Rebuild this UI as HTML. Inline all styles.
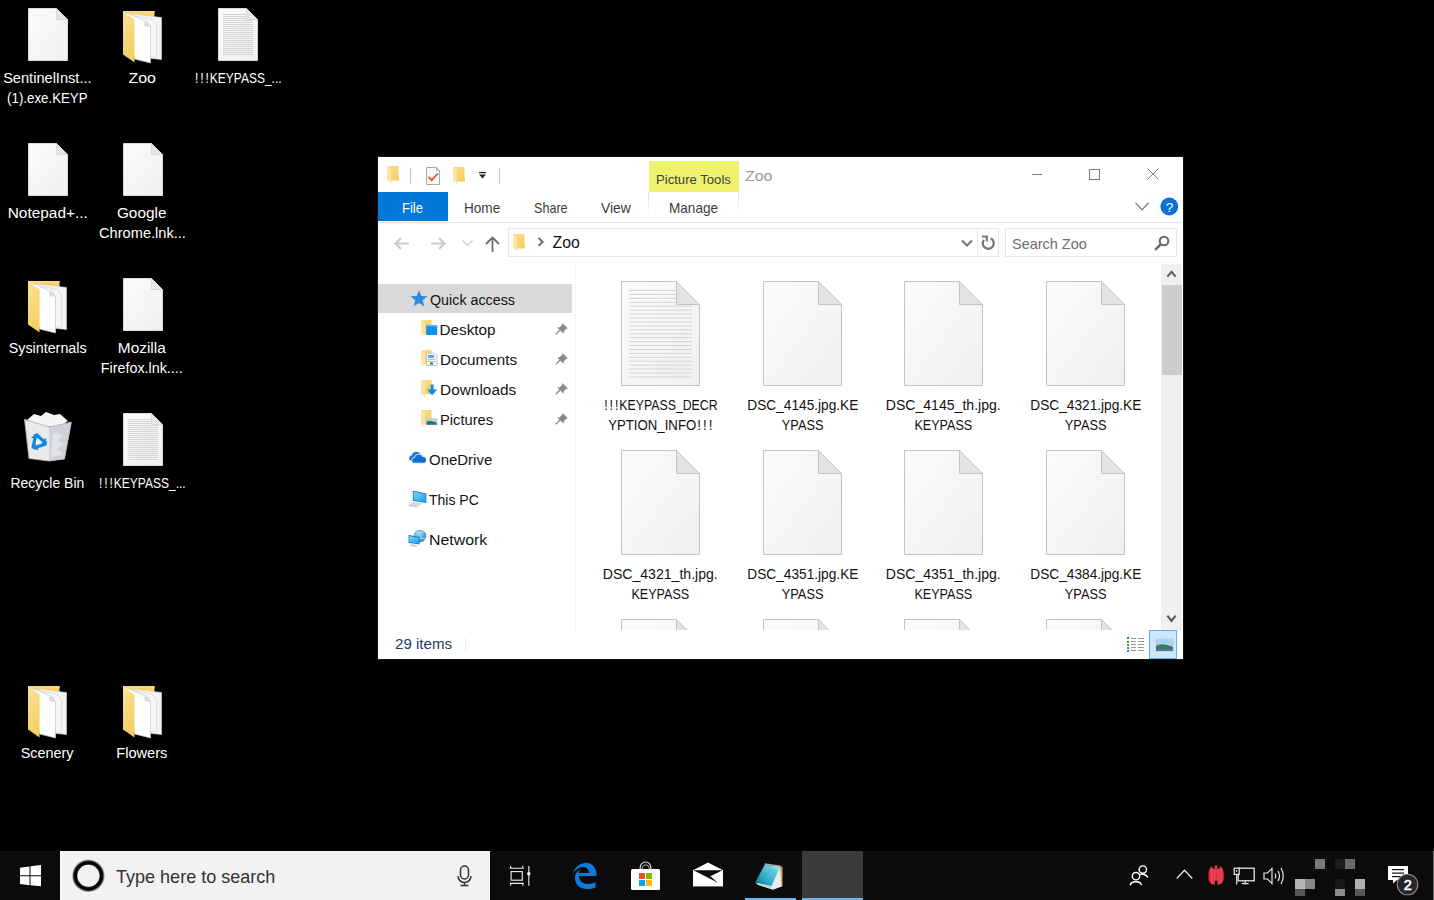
<!DOCTYPE html><html><head><meta charset="utf-8"><title>Desktop</title><style>
*{margin:0;padding:0;box-sizing:border-box}
html,body{width:1434px;height:900px;overflow:hidden;background:#000;font-family:"Liberation Sans", sans-serif;position:relative}
.a{position:absolute;display:block}
.t{position:absolute;white-space:pre;font-family:"Liberation Sans", sans-serif}
</style></head><body><svg class="a" style="left:28px;top:8px" width="40" height="53" viewBox="0 0 40 53"><defs><linearGradient id="g1" x1="0" y1="0" x2="1" y2="1"><stop offset="0" stop-color="#fbfbfb"/><stop offset="1" stop-color="#eff0f1"/></linearGradient></defs><path d="M0.5 0.5 H28.5 L39.5 11.5 V52.5 H0.5 Z" fill="url(#g1)" stroke="#d8d8d8"/><path d="M28.5 0.5 V11.5 H39.5 Z" fill="#e6e6e6" stroke="#d8d8d8"/></svg><svg class="a" style="left:123px;top:10px" width="40" height="54" viewBox="0 0 40 54"><defs><linearGradient id="g2" x1="0" y1="0" x2="0.3" y2="1"><stop offset="0" stop-color="#fbe39b"/><stop offset="1" stop-color="#f4cf62"/></linearGradient></defs><path d="M0 1 H31.5 V44 H0 Z" fill="#f5d36b"/><path d="M0 1 H31.5 V3 H0 Z" fill="#fad977"/><path d="M8 4 L38.5 7.5 V49.5 L24 48 Z" fill="#f3f3f3" stroke="#d6d6d6" stroke-width="0.6"/><path d="M4.5 4.5 L29.5 9.5 L33.5 15 V47 L14 47.5 Z" fill="#f7f7f7" stroke="#cfcfcf" stroke-width="0.6"/><path d="M2 2 L24.5 12 L27.5 17 V53 L11.5 49 Z" fill="#fefefe" stroke="#c4c4c4" stroke-width="0.7"/><path d="M21 12 L24.5 12 L27.5 17 L21.5 16 Z" fill="#dcdcdc"/><path d="M0 1 L11.5 9.5 V52.5 L0 44.5 Z" fill="url(#g2)"/></svg><svg class="a" style="left:218px;top:8px" width="40" height="53" viewBox="0 0 40 53"><defs><linearGradient id="g3" x1="0" y1="0" x2="1" y2="1"><stop offset="0" stop-color="#fbfbfb"/><stop offset="1" stop-color="#eff0f1"/></linearGradient></defs><path d="M0.5 0.5 H28.5 L39.5 11.5 V52.5 H0.5 Z" fill="url(#g3)" stroke="#d8d8d8"/><rect x="5" y="6.00" width="23" height="1" fill="#d2d4d6"/><rect x="5" y="8.00" width="23" height="1" fill="#d2d4d6"/><rect x="5" y="10.00" width="23" height="1" fill="#d2d4d6"/><rect x="5" y="12.00" width="30" height="1" fill="#d2d4d6"/><rect x="5" y="14.00" width="30" height="1" fill="#d2d4d6"/><rect x="5" y="16.00" width="30" height="1" fill="#d2d4d6"/><rect x="5" y="18.00" width="30" height="1" fill="#d2d4d6"/><rect x="5" y="20.00" width="30" height="1" fill="#d2d4d6"/><rect x="5" y="22.00" width="30" height="1" fill="#d2d4d6"/><rect x="5" y="24.00" width="30" height="1" fill="#d2d4d6"/><rect x="5" y="26.00" width="30" height="1" fill="#d2d4d6"/><rect x="5" y="28.00" width="30" height="1" fill="#d2d4d6"/><rect x="5" y="30.00" width="30" height="1" fill="#d2d4d6"/><rect x="5" y="32.00" width="30" height="1" fill="#d2d4d6"/><rect x="5" y="34.00" width="30" height="1" fill="#d2d4d6"/><rect x="5" y="36.00" width="30" height="1" fill="#d2d4d6"/><rect x="5" y="38.00" width="30" height="1" fill="#d2d4d6"/><rect x="5" y="40.00" width="30" height="1" fill="#d2d4d6"/><rect x="5" y="42.00" width="30" height="1" fill="#d2d4d6"/><rect x="5" y="44.00" width="30" height="1" fill="#d2d4d6"/><rect x="5" y="46.00" width="30" height="1" fill="#d2d4d6"/><path d="M28.5 0.5 V11.5 H39.5 Z" fill="#e6e6e6" stroke="#d8d8d8"/></svg><svg class="a" style="left:28px;top:143px" width="40" height="53" viewBox="0 0 40 53"><defs><linearGradient id="g4" x1="0" y1="0" x2="1" y2="1"><stop offset="0" stop-color="#fbfbfb"/><stop offset="1" stop-color="#eff0f1"/></linearGradient></defs><path d="M0.5 0.5 H28.5 L39.5 11.5 V52.5 H0.5 Z" fill="url(#g4)" stroke="#d8d8d8"/><path d="M28.5 0.5 V11.5 H39.5 Z" fill="#e6e6e6" stroke="#d8d8d8"/></svg><svg class="a" style="left:123px;top:143px" width="40" height="53" viewBox="0 0 40 53"><defs><linearGradient id="g5" x1="0" y1="0" x2="1" y2="1"><stop offset="0" stop-color="#fbfbfb"/><stop offset="1" stop-color="#eff0f1"/></linearGradient></defs><path d="M0.5 0.5 H28.5 L39.5 11.5 V52.5 H0.5 Z" fill="url(#g5)" stroke="#d8d8d8"/><path d="M28.5 0.5 V11.5 H39.5 Z" fill="#e6e6e6" stroke="#d8d8d8"/></svg><svg class="a" style="left:28px;top:280px" width="40" height="54" viewBox="0 0 40 54"><defs><linearGradient id="g6" x1="0" y1="0" x2="0.3" y2="1"><stop offset="0" stop-color="#fbe39b"/><stop offset="1" stop-color="#f4cf62"/></linearGradient></defs><path d="M0 1 H31.5 V44 H0 Z" fill="#f5d36b"/><path d="M0 1 H31.5 V3 H0 Z" fill="#fad977"/><path d="M8 4 L38.5 7.5 V49.5 L24 48 Z" fill="#f3f3f3" stroke="#d6d6d6" stroke-width="0.6"/><path d="M4.5 4.5 L29.5 9.5 L33.5 15 V47 L14 47.5 Z" fill="#f7f7f7" stroke="#cfcfcf" stroke-width="0.6"/><path d="M2 2 L24.5 12 L27.5 17 V53 L11.5 49 Z" fill="#fefefe" stroke="#c4c4c4" stroke-width="0.7"/><path d="M21 12 L24.5 12 L27.5 17 L21.5 16 Z" fill="#dcdcdc"/><path d="M0 1 L11.5 9.5 V52.5 L0 44.5 Z" fill="url(#g6)"/></svg><svg class="a" style="left:123px;top:278px" width="40" height="53" viewBox="0 0 40 53"><defs><linearGradient id="g7" x1="0" y1="0" x2="1" y2="1"><stop offset="0" stop-color="#fbfbfb"/><stop offset="1" stop-color="#eff0f1"/></linearGradient></defs><path d="M0.5 0.5 H28.5 L39.5 11.5 V52.5 H0.5 Z" fill="url(#g7)" stroke="#d8d8d8"/><path d="M28.5 0.5 V11.5 H39.5 Z" fill="#e6e6e6" stroke="#d8d8d8"/></svg><svg class="a" style="left:24px;top:411px" width="48" height="52" viewBox="0 0 48 52"><path d="M3 9 L10 3 L17 5 L22 1 L30 4 L36 3 L44 10 L35 16 L12 15 Z" fill="#f4f5f6"/><path d="M0.5 8.4 L25 16 L47.3 11.3 L40.5 48 L25 50 L5 47.5 Z" fill="#e9ebed"/><path d="M25 16 L47.3 11.3 L40.5 48 L25 50 Z" fill="#cfd3d7"/><path d="M29 22 L40 24 L33 30 L42 33 L32 38 L40 43 L27 46 Z" fill="#e3e6e9" opacity="0.9"/><path d="M0.5 8.4 L25 16 L47.3 11.3" fill="none" stroke="#b9bec3" stroke-width="1"/><path d="M0.5 8.4 L5 47.5 L25 50 L40.5 48 L47.3 11.3" fill="none" stroke="#aeb3b8" stroke-width="0.8"/><g transform="translate(14.4 31) rotate(-18) scale(1.1)" fill="#1688e3"><path d="M-2.2 -7.8 L1.6 -7.8 L5.6 -0.6 L7.4 -1.6 L6.8 4 L1.8 2.6 L3.5 1.6 L0.2 -4.2 Z"/><g transform="rotate(120)"><path d="M-2.2 -7.8 L1.6 -7.8 L5.6 -0.6 L7.4 -1.6 L6.8 4 L1.8 2.6 L3.5 1.6 L0.2 -4.2 Z"/></g><g transform="rotate(240)"><path d="M-2.2 -7.8 L1.6 -7.8 L5.6 -0.6 L7.4 -1.6 L6.8 4 L1.8 2.6 L3.5 1.6 L0.2 -4.2 Z"/></g></g></svg><svg class="a" style="left:123px;top:413px" width="40" height="53" viewBox="0 0 40 53"><defs><linearGradient id="g8" x1="0" y1="0" x2="1" y2="1"><stop offset="0" stop-color="#fbfbfb"/><stop offset="1" stop-color="#eff0f1"/></linearGradient></defs><path d="M0.5 0.5 H28.5 L39.5 11.5 V52.5 H0.5 Z" fill="url(#g8)" stroke="#d8d8d8"/><rect x="5" y="6.00" width="23" height="1" fill="#d2d4d6"/><rect x="5" y="8.00" width="23" height="1" fill="#d2d4d6"/><rect x="5" y="10.00" width="23" height="1" fill="#d2d4d6"/><rect x="5" y="12.00" width="30" height="1" fill="#d2d4d6"/><rect x="5" y="14.00" width="30" height="1" fill="#d2d4d6"/><rect x="5" y="16.00" width="30" height="1" fill="#d2d4d6"/><rect x="5" y="18.00" width="30" height="1" fill="#d2d4d6"/><rect x="5" y="20.00" width="30" height="1" fill="#d2d4d6"/><rect x="5" y="22.00" width="30" height="1" fill="#d2d4d6"/><rect x="5" y="24.00" width="30" height="1" fill="#d2d4d6"/><rect x="5" y="26.00" width="30" height="1" fill="#d2d4d6"/><rect x="5" y="28.00" width="30" height="1" fill="#d2d4d6"/><rect x="5" y="30.00" width="30" height="1" fill="#d2d4d6"/><rect x="5" y="32.00" width="30" height="1" fill="#d2d4d6"/><rect x="5" y="34.00" width="30" height="1" fill="#d2d4d6"/><rect x="5" y="36.00" width="30" height="1" fill="#d2d4d6"/><rect x="5" y="38.00" width="30" height="1" fill="#d2d4d6"/><rect x="5" y="40.00" width="30" height="1" fill="#d2d4d6"/><rect x="5" y="42.00" width="30" height="1" fill="#d2d4d6"/><rect x="5" y="44.00" width="30" height="1" fill="#d2d4d6"/><rect x="5" y="46.00" width="30" height="1" fill="#d2d4d6"/><path d="M28.5 0.5 V11.5 H39.5 Z" fill="#e6e6e6" stroke="#d8d8d8"/></svg><svg class="a" style="left:28px;top:685px" width="40" height="54" viewBox="0 0 40 54"><defs><linearGradient id="g9" x1="0" y1="0" x2="0.3" y2="1"><stop offset="0" stop-color="#fbe39b"/><stop offset="1" stop-color="#f4cf62"/></linearGradient></defs><path d="M0 1 H31.5 V44 H0 Z" fill="#f5d36b"/><path d="M0 1 H31.5 V3 H0 Z" fill="#fad977"/><path d="M8 4 L38.5 7.5 V49.5 L24 48 Z" fill="#f3f3f3" stroke="#d6d6d6" stroke-width="0.6"/><path d="M4.5 4.5 L29.5 9.5 L33.5 15 V47 L14 47.5 Z" fill="#f7f7f7" stroke="#cfcfcf" stroke-width="0.6"/><path d="M2 2 L24.5 12 L27.5 17 V53 L11.5 49 Z" fill="#fefefe" stroke="#c4c4c4" stroke-width="0.7"/><path d="M21 12 L24.5 12 L27.5 17 L21.5 16 Z" fill="#dcdcdc"/><path d="M0 1 L11.5 9.5 V52.5 L0 44.5 Z" fill="url(#g9)"/></svg><svg class="a" style="left:123px;top:685px" width="40" height="54" viewBox="0 0 40 54"><defs><linearGradient id="g10" x1="0" y1="0" x2="0.3" y2="1"><stop offset="0" stop-color="#fbe39b"/><stop offset="1" stop-color="#f4cf62"/></linearGradient></defs><path d="M0 1 H31.5 V44 H0 Z" fill="#f5d36b"/><path d="M0 1 H31.5 V3 H0 Z" fill="#fad977"/><path d="M8 4 L38.5 7.5 V49.5 L24 48 Z" fill="#f3f3f3" stroke="#d6d6d6" stroke-width="0.6"/><path d="M4.5 4.5 L29.5 9.5 L33.5 15 V47 L14 47.5 Z" fill="#f7f7f7" stroke="#cfcfcf" stroke-width="0.6"/><path d="M2 2 L24.5 12 L27.5 17 V53 L11.5 49 Z" fill="#fefefe" stroke="#c4c4c4" stroke-width="0.7"/><path d="M21 12 L24.5 12 L27.5 17 L21.5 16 Z" fill="#dcdcdc"/><path d="M0 1 L11.5 9.5 V52.5 L0 44.5 Z" fill="url(#g10)"/></svg><div class="a" style="left:377px;top:156px;width:807px;height:504px;background:#fff;border:1px solid #151515"></div><svg class="a" style="left:387px;top:166px" width="13" height="18" viewBox="0 0 13 18"><defs><linearGradient id="qf" x1="0" y1="0" x2="1" y2="1"><stop offset="0" stop-color="#f9de8a"/><stop offset="1" stop-color="#f3cd5c"/></linearGradient></defs><path d="M1 0 H11.5 V9.5 L12 10 V14.5 H1 Z" fill="url(#qf)"/><path d="M0 0.3 L4.3 2.5 V16.8 L0 13.8 Z" fill="#fbe6a3"/><path d="M4.3 2.5 V16.8" stroke="#f0d070" stroke-width="0.5"/></svg><div class="a" style="left:410px;top:168px;width:1px;height:16px;background:#c4c4c4"></div><svg class="a" style="left:426px;top:167px" width="14" height="18" viewBox="0 0 14 18"><path d="M0.5 0.5 H10.5 L13.5 3.5 V17.5 H0.5 Z" fill="#f7f8f9" stroke="#a9a9a9"/><path d="M10.5 0.5 V3.5 H13.5" fill="none" stroke="#b9b9b9"/><path d="M2.5 10 L5.8 13.2 L11.8 6.5" fill="none" stroke="#f24e1e" stroke-width="1.8"/></svg><svg class="a" style="left:453px;top:167px" width="13" height="18" viewBox="0 0 13 18"><defs><linearGradient id="qf" x1="0" y1="0" x2="1" y2="1"><stop offset="0" stop-color="#f9de8a"/><stop offset="1" stop-color="#f3cd5c"/></linearGradient></defs><path d="M1 0 H11.5 V9.5 L12 10 V14.5 H1 Z" fill="url(#qf)"/><path d="M0 0.3 L4.3 2.5 V16.8 L0 13.8 Z" fill="#fbe6a3"/><path d="M4.3 2.5 V16.8" stroke="#f0d070" stroke-width="0.5"/></svg><svg class="a" style="left:479px;top:172px" width="7" height="7" viewBox="0 0 7 7"><rect x="0" y="0" width="7" height="1.2" fill="#222"/><path d="M0 2.5 H7 L3.5 6.5 Z" fill="#222"/></svg><div class="a" style="left:499px;top:168px;width:1px;height:16px;background:#c4c4c4"></div><div class="a" style="left:649px;top:161px;width:90px;height:31px;background:#eef26e"></div><div class="a" style="left:1032px;top:174px;width:10px;height:1px;background:#7a7a7a"></div><div class="a" style="left:1089px;top:169px;width:11px;height:11px;border:1px solid #7a7a7a"></div><svg class="a" style="left:1147px;top:168px" width="12" height="12" viewBox="0 0 12 12"><path d="M0.5 0.5 L11.5 11.5 M11.5 0.5 L0.5 11.5" stroke="#7a7a7a" stroke-width="0.95"/></svg><div class="a" style="left:378px;top:192px;width:70px;height:29px;background:#0078d7"></div><div class="a" style="left:648px;top:192px;width:1px;height:23px;background:linear-gradient(#dedede,#fff)"></div><div class="a" style="left:738px;top:192px;width:1px;height:23px;background:linear-gradient(#dedede,#fff)"></div><div class="a" style="left:378px;top:222px;width:804px;height:1px;background:#e3e3e3"></div><svg class="a" style="left:1135px;top:202px" width="14" height="9" viewBox="0 0 14 9"><path d="M0.5 0.8 L7 7.8 L13.5 0.8" fill="none" stroke="#6f6f6f" stroke-width="1.2"/></svg><svg class="a" style="left:1160px;top:197px" width="19" height="19" viewBox="0 0 19 19"><circle cx="9.3" cy="9.5" r="8.9" fill="#0a6ccd"/><circle cx="9.3" cy="9.5" r="8.1" fill="#0c73d6"/><text x="9.6" y="14.6" font-family="Liberation Sans" font-size="13.5" fill="#fff" text-anchor="middle">?</text></svg><svg class="a" style="left:394px;top:237px" width="16" height="13" viewBox="0 0 16 13"><path d="M15 6.5 H2 M7 1 L1.5 6.5 L7 12" fill="none" stroke="#cacaca" stroke-width="2"/></svg><svg class="a" style="left:430px;top:237px" width="16" height="13" viewBox="0 0 16 13"><path d="M1 6.5 H14 M9 1 L14.5 6.5 L9 12" fill="none" stroke="#cacaca" stroke-width="2"/></svg><svg class="a" style="left:462px;top:240px" width="11" height="7" viewBox="0 0 11 7"><path d="M0.5 0.5 L5.5 5.5 L10.5 0.5" fill="none" stroke="#c9c9c9" stroke-width="1.2"/></svg><svg class="a" style="left:485px;top:236px" width="15" height="16" viewBox="0 0 15 16"><path d="M7.5 16 V2 M1 8 L7.5 1.5 L14 8" fill="none" stroke="#6d6d6d" stroke-width="1.8"/></svg><div class="a" style="left:508px;top:228px;width:491px;height:29px;border:1px solid #e6e6e6"></div><svg class="a" style="left:513px;top:234px" width="13" height="18" viewBox="0 0 13 18"><defs><linearGradient id="qf" x1="0" y1="0" x2="1" y2="1"><stop offset="0" stop-color="#f9de8a"/><stop offset="1" stop-color="#f3cd5c"/></linearGradient></defs><path d="M1 0 H11.5 V9.5 L12 10 V14.5 H1 Z" fill="url(#qf)"/><path d="M0 0.3 L4.3 2.5 V16.8 L0 13.8 Z" fill="#fbe6a3"/><path d="M4.3 2.5 V16.8" stroke="#f0d070" stroke-width="0.5"/></svg><svg class="a" style="left:537px;top:237px" width="8" height="10" viewBox="0 0 8 10"><path d="M1.6 1 L5.6 4.9 L1.6 8.8" fill="none" stroke="#707070" stroke-width="2.1"/></svg><svg class="a" style="left:961px;top:239px" width="12" height="9" viewBox="0 0 12 9"><path d="M1 1.5 L6 6.5 L11 1.5" fill="none" stroke="#7a7a7a" stroke-width="2.2"/></svg><div class="a" style="left:977px;top:229px;width:1px;height:27px;background:#ececec"></div><svg class="a" style="left:980px;top:235px" width="17" height="17" viewBox="0 0 17 17"><path d="M10.7 3.3 A5.5 5.5 0 1 1 3.9 4.9" fill="none" stroke="#777" stroke-width="2.3"/><path d="M1.8 1.5 H6.8 V6.5" fill="none" stroke="#777" stroke-width="2.2"/></svg><div class="a" style="left:1005px;top:228px;width:172px;height:29px;border:1px solid #e6e6e6"></div><svg class="a" style="left:1154px;top:235px" width="16" height="16" viewBox="0 0 16 16"><circle cx="10" cy="6" r="4.3" fill="none" stroke="#6a6a6a" stroke-width="2.1"/><path d="M7 9 L1.2 14.8" stroke="#6a6a6a" stroke-width="2.5"/></svg><div class="a" style="left:378px;top:284px;width:194px;height:29px;background:#d9d9d9"></div><div class="a" style="left:575px;top:263px;width:1px;height:367px;background:#f3f3f3"></div><svg class="a" style="left:410px;top:290px" width="18" height="17" viewBox="0 0 18 17"><path d="M9 0.5 L11.3 6 L17.5 6.3 L12.7 10.2 L14.3 16.3 L9 12.9 L3.7 16.3 L5.3 10.2 L0.5 6.3 L6.7 6 Z" fill="#2b8ae0"/></svg><svg class="a" style="left:421px;top:320px" width="17" height="18" viewBox="0 0 17 18"><defs><linearGradient id="nf" x1="0" y1="0" x2="1" y2="1"><stop offset="0" stop-color="#f9de8a"/><stop offset="1" stop-color="#f3cd5c"/></linearGradient></defs><path d="M1 0 H10.5 V14 H1 Z" fill="url(#nf)"/><path d="M0 0.3 L4 2.5 V17 L0 14 Z" fill="#fbe6a3"/><rect x="5.2" y="5" width="11" height="10" fill="#0d8ef0"/><rect x="5.2" y="5" width="11" height="1.5" fill="#57b4f7"/></svg><svg class="a" style="left:555px;top:322px" width="14" height="13" viewBox="0 0 14 13"><path d="M7.5 1 L13 6.5 L11.3 6.8 L8.8 9.3 L8.6 11.8 L2.2 5.4 L4.7 5.2 L7.2 2.7 Z" fill="#8a8a8a"/><path d="M5 8 L0.8 12.2" stroke="#8a8a8a" stroke-width="1.3"/></svg><svg class="a" style="left:421px;top:350px" width="17" height="18" viewBox="0 0 17 18"><defs><linearGradient id="nf" x1="0" y1="0" x2="1" y2="1"><stop offset="0" stop-color="#f9de8a"/><stop offset="1" stop-color="#f3cd5c"/></linearGradient></defs><path d="M1 0 H10.5 V14 H1 Z" fill="url(#nf)"/><path d="M0 0.3 L4 2.5 V17 L0 14 Z" fill="#fbe6a3"/><path d="M5.5 3 H13.5 L16 5.5 V15.5 H5.5 Z" fill="#f4f4f4" stroke="#a9b0b5" stroke-width="0.7"/><rect x="7" y="5" width="6" height="3" fill="#5aaae6"/><rect x="7" y="9" width="7.5" height="1" fill="#b8c0c6"/><rect x="7" y="11" width="7.5" height="1" fill="#b8c0c6"/><rect x="9" y="12.5" width="3" height="2" fill="#3b7a58"/></svg><svg class="a" style="left:555px;top:352px" width="14" height="13" viewBox="0 0 14 13"><path d="M7.5 1 L13 6.5 L11.3 6.8 L8.8 9.3 L8.6 11.8 L2.2 5.4 L4.7 5.2 L7.2 2.7 Z" fill="#8a8a8a"/><path d="M5 8 L0.8 12.2" stroke="#8a8a8a" stroke-width="1.3"/></svg><svg class="a" style="left:421px;top:380px" width="17" height="18" viewBox="0 0 17 18"><defs><linearGradient id="nf" x1="0" y1="0" x2="1" y2="1"><stop offset="0" stop-color="#f9de8a"/><stop offset="1" stop-color="#f3cd5c"/></linearGradient></defs><path d="M1 0 H10.5 V14 H1 Z" fill="url(#nf)"/><path d="M0 0.3 L4 2.5 V17 L0 14 Z" fill="#fbe6a3"/><path d="M9.6 4.5 H12.6 V9.5 H16.3 L11.1 15.2 L5.9 9.5 H9.6 Z" fill="#0f8cf0"/></svg><svg class="a" style="left:555px;top:382px" width="14" height="13" viewBox="0 0 14 13"><path d="M7.5 1 L13 6.5 L11.3 6.8 L8.8 9.3 L8.6 11.8 L2.2 5.4 L4.7 5.2 L7.2 2.7 Z" fill="#8a8a8a"/><path d="M5 8 L0.8 12.2" stroke="#8a8a8a" stroke-width="1.3"/></svg><svg class="a" style="left:421px;top:410px" width="17" height="18" viewBox="0 0 17 18"><defs><linearGradient id="nf" x1="0" y1="0" x2="1" y2="1"><stop offset="0" stop-color="#f9de8a"/><stop offset="1" stop-color="#f3cd5c"/></linearGradient></defs><path d="M1 0 H10.5 V14 H1 Z" fill="url(#nf)"/><path d="M0 0.3 L4 2.5 V17 L0 14 Z" fill="#fbe6a3"/><rect x="4.8" y="8.3" width="11.6" height="7" fill="#c9cfd3"/><rect x="5.6" y="9" width="10" height="5.6" fill="#a5d6f2"/><path d="M5.6 11.5 Q9 10 15.6 12.5 V14.6 H5.6 Z" fill="#2e6f4a"/><rect x="5.6" y="13.6" width="10" height="1" fill="#3e78b0"/></svg><svg class="a" style="left:555px;top:412px" width="14" height="13" viewBox="0 0 14 13"><path d="M7.5 1 L13 6.5 L11.3 6.8 L8.8 9.3 L8.6 11.8 L2.2 5.4 L4.7 5.2 L7.2 2.7 Z" fill="#8a8a8a"/><path d="M5 8 L0.8 12.2" stroke="#8a8a8a" stroke-width="1.3"/></svg><svg class="a" style="left:408px;top:451px" width="19" height="13" viewBox="0 0 19 13"><path d="M2.2 9.5 A3 3 0 0 1 3.6 4.2 A5 5 0 0 1 12.6 3.2 A3.6 3.6 0 0 1 15 5.5 L8 11 Z" fill="#1a7fe0"/><path d="M5.5 12.2 A2.9 2.9 0 0 1 6.3 6.6 A4.3 4.3 0 0 1 14.4 5.6 A3.3 3.3 0 0 1 18.5 9 A3 3 0 0 1 16.2 12.2 Z" fill="#0f6fd0" stroke="#fff" stroke-width="0.8"/></svg><svg class="a" style="left:408px;top:490px" width="20" height="18" viewBox="0 0 20 18"><defs><linearGradient id="pcg" x1="0" y1="0" x2="1" y2="1"><stop offset="0" stop-color="#7fd6fb"/><stop offset="1" stop-color="#19a0ea"/></linearGradient></defs><path d="M4.8 0.8 L18.3 3.5 V13 L4.8 10.8 Z" fill="#1372bd"/><path d="M5.6 1.8 L17.6 4.2 V12.1 L5.6 10.1 Z" fill="url(#pcg)"/><path d="M0.5 15.5 L6 12.5 L13.5 13.6 L8.3 17.2 Z" fill="#d5d8da" stroke="#b5b9bc" stroke-width="0.5"/></svg><svg class="a" style="left:408px;top:529px" width="20" height="20" viewBox="0 0 20 20"><defs><radialGradient id="ntg" cx="0.4" cy="0.3" r="0.8"><stop offset="0" stop-color="#9fdcf5"/><stop offset="1" stop-color="#1e7fc0"/></radialGradient><linearGradient id="ntm" x1="0" y1="0" x2="1" y2="1"><stop offset="0" stop-color="#7fd6fb"/><stop offset="1" stop-color="#19a0ea"/></linearGradient></defs><circle cx="12" cy="7" r="6.2" fill="url(#ntg)"/><path d="M8 3 Q12 5 16 2.5 M9 10 Q13 8 18 10" fill="none" stroke="#d8f1fb" stroke-width="0.7"/><path d="M0.6 6 L11.6 8 V15.6 L0.6 13.8 Z" fill="#1372bd"/><path d="M1.3 6.9 L11 8.7 V14.8 L1.3 13.1 Z" fill="url(#ntm)"/><path d="M3 15 L9 16 L8.5 18 L2.5 17.2 Z" fill="#c9cdd0"/></svg><svg class="a" style="left:621px;top:281px" width="79" height="105" viewBox="0 0 79 105"><defs><linearGradient id="g11" x1="0" y1="0" x2="1" y2="1"><stop offset="0" stop-color="#fbfbfb"/><stop offset="1" stop-color="#eff0f1"/></linearGradient></defs><path d="M0.5 0.5 H55.5 L78.5 23.5 V104.5 H0.5 Z" fill="url(#g11)" stroke="#c4c4c4"/><rect x="8" y="9.00" width="47" height="1" fill="#d2d4d6"/><rect x="8" y="12.93" width="47" height="1" fill="#d2d4d6"/><rect x="8" y="16.86" width="47" height="1" fill="#d2d4d6"/><rect x="8" y="20.79" width="47" height="1" fill="#d2d4d6"/><rect x="8" y="24.72" width="63" height="1" fill="#d2d4d6"/><rect x="8" y="28.65" width="63" height="1" fill="#d2d4d6"/><rect x="8" y="32.58" width="63" height="1" fill="#d2d4d6"/><rect x="8" y="36.51" width="63" height="1" fill="#d2d4d6"/><rect x="8" y="40.44" width="63" height="1" fill="#d2d4d6"/><rect x="8" y="44.37" width="63" height="1" fill="#d2d4d6"/><rect x="8" y="48.30" width="63" height="1" fill="#d2d4d6"/><rect x="8" y="52.23" width="63" height="1" fill="#d2d4d6"/><rect x="8" y="56.16" width="63" height="1" fill="#d2d4d6"/><rect x="8" y="60.09" width="63" height="1" fill="#d2d4d6"/><rect x="8" y="64.02" width="63" height="1" fill="#d2d4d6"/><rect x="8" y="67.95" width="63" height="1" fill="#d2d4d6"/><rect x="8" y="71.88" width="63" height="1" fill="#d2d4d6"/><rect x="8" y="75.81" width="63" height="1" fill="#d2d4d6"/><rect x="8" y="79.74" width="63" height="1" fill="#d2d4d6"/><rect x="8" y="83.67" width="63" height="1" fill="#d2d4d6"/><rect x="8" y="87.60" width="63" height="1" fill="#d2d4d6"/><rect x="8" y="91.53" width="63" height="1" fill="#d2d4d6"/><rect x="8" y="95.46" width="63" height="1" fill="#d2d4d6"/><path d="M55.5 0.5 V23.5 H78.5 Z" fill="#e3e3e3" stroke="#c4c4c4"/></svg><svg class="a" style="left:763px;top:281px" width="79" height="105" viewBox="0 0 79 105"><defs><linearGradient id="g12" x1="0" y1="0" x2="1" y2="1"><stop offset="0" stop-color="#fbfbfb"/><stop offset="1" stop-color="#eff0f1"/></linearGradient></defs><path d="M0.5 0.5 H55.5 L78.5 23.5 V104.5 H0.5 Z" fill="url(#g12)" stroke="#c4c4c4"/><path d="M55.5 0.5 V23.5 H78.5 Z" fill="#e3e3e3" stroke="#c4c4c4"/></svg><svg class="a" style="left:904px;top:281px" width="79" height="105" viewBox="0 0 79 105"><defs><linearGradient id="g13" x1="0" y1="0" x2="1" y2="1"><stop offset="0" stop-color="#fbfbfb"/><stop offset="1" stop-color="#eff0f1"/></linearGradient></defs><path d="M0.5 0.5 H55.5 L78.5 23.5 V104.5 H0.5 Z" fill="url(#g13)" stroke="#c4c4c4"/><path d="M55.5 0.5 V23.5 H78.5 Z" fill="#e3e3e3" stroke="#c4c4c4"/></svg><svg class="a" style="left:1046px;top:281px" width="79" height="105" viewBox="0 0 79 105"><defs><linearGradient id="g14" x1="0" y1="0" x2="1" y2="1"><stop offset="0" stop-color="#fbfbfb"/><stop offset="1" stop-color="#eff0f1"/></linearGradient></defs><path d="M0.5 0.5 H55.5 L78.5 23.5 V104.5 H0.5 Z" fill="url(#g14)" stroke="#c4c4c4"/><path d="M55.5 0.5 V23.5 H78.5 Z" fill="#e3e3e3" stroke="#c4c4c4"/></svg><svg class="a" style="left:621px;top:450px" width="79" height="105" viewBox="0 0 79 105"><defs><linearGradient id="g15" x1="0" y1="0" x2="1" y2="1"><stop offset="0" stop-color="#fbfbfb"/><stop offset="1" stop-color="#eff0f1"/></linearGradient></defs><path d="M0.5 0.5 H55.5 L78.5 23.5 V104.5 H0.5 Z" fill="url(#g15)" stroke="#c4c4c4"/><path d="M55.5 0.5 V23.5 H78.5 Z" fill="#e3e3e3" stroke="#c4c4c4"/></svg><svg class="a" style="left:763px;top:450px" width="79" height="105" viewBox="0 0 79 105"><defs><linearGradient id="g16" x1="0" y1="0" x2="1" y2="1"><stop offset="0" stop-color="#fbfbfb"/><stop offset="1" stop-color="#eff0f1"/></linearGradient></defs><path d="M0.5 0.5 H55.5 L78.5 23.5 V104.5 H0.5 Z" fill="url(#g16)" stroke="#c4c4c4"/><path d="M55.5 0.5 V23.5 H78.5 Z" fill="#e3e3e3" stroke="#c4c4c4"/></svg><svg class="a" style="left:904px;top:450px" width="79" height="105" viewBox="0 0 79 105"><defs><linearGradient id="g17" x1="0" y1="0" x2="1" y2="1"><stop offset="0" stop-color="#fbfbfb"/><stop offset="1" stop-color="#eff0f1"/></linearGradient></defs><path d="M0.5 0.5 H55.5 L78.5 23.5 V104.5 H0.5 Z" fill="url(#g17)" stroke="#c4c4c4"/><path d="M55.5 0.5 V23.5 H78.5 Z" fill="#e3e3e3" stroke="#c4c4c4"/></svg><svg class="a" style="left:1046px;top:450px" width="79" height="105" viewBox="0 0 79 105"><defs><linearGradient id="g18" x1="0" y1="0" x2="1" y2="1"><stop offset="0" stop-color="#fbfbfb"/><stop offset="1" stop-color="#eff0f1"/></linearGradient></defs><path d="M0.5 0.5 H55.5 L78.5 23.5 V104.5 H0.5 Z" fill="url(#g18)" stroke="#c4c4c4"/><path d="M55.5 0.5 V23.5 H78.5 Z" fill="#e3e3e3" stroke="#c4c4c4"/></svg><div class="a" style="left:621px;top:619px;width:80px;height:11px;overflow:hidden"><svg class="a" style="left:0px;top:0px" width="79" height="105" viewBox="0 0 79 105"><defs><linearGradient id="g19" x1="0" y1="0" x2="1" y2="1"><stop offset="0" stop-color="#fbfbfb"/><stop offset="1" stop-color="#eff0f1"/></linearGradient></defs><path d="M0.5 0.5 H55.5 L78.5 23.5 V104.5 H0.5 Z" fill="url(#g19)" stroke="#c4c4c4"/><path d="M55.5 0.5 V23.5 H78.5 Z" fill="#e3e3e3" stroke="#c4c4c4"/></svg></div><div class="a" style="left:763px;top:619px;width:80px;height:11px;overflow:hidden"><svg class="a" style="left:0px;top:0px" width="79" height="105" viewBox="0 0 79 105"><defs><linearGradient id="g20" x1="0" y1="0" x2="1" y2="1"><stop offset="0" stop-color="#fbfbfb"/><stop offset="1" stop-color="#eff0f1"/></linearGradient></defs><path d="M0.5 0.5 H55.5 L78.5 23.5 V104.5 H0.5 Z" fill="url(#g20)" stroke="#c4c4c4"/><path d="M55.5 0.5 V23.5 H78.5 Z" fill="#e3e3e3" stroke="#c4c4c4"/></svg></div><div class="a" style="left:904px;top:619px;width:80px;height:11px;overflow:hidden"><svg class="a" style="left:0px;top:0px" width="79" height="105" viewBox="0 0 79 105"><defs><linearGradient id="g21" x1="0" y1="0" x2="1" y2="1"><stop offset="0" stop-color="#fbfbfb"/><stop offset="1" stop-color="#eff0f1"/></linearGradient></defs><path d="M0.5 0.5 H55.5 L78.5 23.5 V104.5 H0.5 Z" fill="url(#g21)" stroke="#c4c4c4"/><path d="M55.5 0.5 V23.5 H78.5 Z" fill="#e3e3e3" stroke="#c4c4c4"/></svg></div><div class="a" style="left:1046px;top:619px;width:80px;height:11px;overflow:hidden"><svg class="a" style="left:0px;top:0px" width="79" height="105" viewBox="0 0 79 105"><defs><linearGradient id="g22" x1="0" y1="0" x2="1" y2="1"><stop offset="0" stop-color="#fbfbfb"/><stop offset="1" stop-color="#eff0f1"/></linearGradient></defs><path d="M0.5 0.5 H55.5 L78.5 23.5 V104.5 H0.5 Z" fill="url(#g22)" stroke="#c4c4c4"/><path d="M55.5 0.5 V23.5 H78.5 Z" fill="#e3e3e3" stroke="#c4c4c4"/></svg></div><div class="a" style="left:378px;top:630px;width:804px;height:28px;background:#fff"></div><div class="a" style="left:1161px;top:264px;width:21px;height:366px;background:#f0f0f0"></div><div class="a" style="left:1162px;top:285px;width:20px;height:90px;background:#cdcdcd"></div><svg class="a" style="left:1166px;top:269px" width="11" height="9" viewBox="0 0 11 9"><path d="M0.5 7 L5.5 1.2 L10.5 7 L8.8 8.3 L5.5 4.6 L2.2 8.3 Z" fill="#606060"/></svg><svg class="a" style="left:1166px;top:615px" width="11" height="9" viewBox="0 0 11 9"><path d="M0.5 1.3 L5.5 7.8 L10.5 1.3 L8.8 0 L5.5 4 L2.2 0 Z" fill="#606060"/></svg><div class="a" style="left:465px;top:638px;width:1px;height:13px;background:#ececec"></div><svg class="a" style="left:1127px;top:636px" width="18" height="16" viewBox="0 0 18 16"><rect x="0" y="1" width="2" height="2" fill="#2b7bd6"/><rect x="0" y="5" width="2" height="2" fill="#3a9a4a"/><rect x="0" y="8" width="2" height="2" fill="#e04a2a"/><rect x="0" y="11" width="2" height="2" fill="#3a9a4a"/><rect x="0" y="14" width="2" height="2" fill="#2b7bd6"/><rect x="4" y="2" width="5" height="1" fill="#9a9a9a"/><rect x="11" y="2" width="6" height="1" fill="#9a9a9a"/><rect x="4" y="5" width="5" height="1" fill="#9a9a9a"/><rect x="11" y="5" width="6" height="1" fill="#9a9a9a"/><rect x="4" y="8" width="5" height="1" fill="#9a9a9a"/><rect x="11" y="8" width="6" height="1" fill="#9a9a9a"/><rect x="4" y="11" width="5" height="1" fill="#9a9a9a"/><rect x="11" y="11" width="6" height="1" fill="#9a9a9a"/><rect x="4" y="14" width="5" height="1" fill="#9a9a9a"/><rect x="11" y="14" width="6" height="1" fill="#9a9a9a"/></svg><div class="a" style="left:1149px;top:630px;width:28px;height:29px;background:#cce8ff;border:1px solid #5ab4e8"></div><svg class="a" style="left:1155px;top:638px" width="19" height="14" viewBox="0 0 19 14"><rect x="0" y="0" width="19" height="14" fill="#cfd6dc"/><rect x="1" y="1" width="17" height="12" fill="#a9d4f0"/><path d="M1 8 Q6 4 18 9 V13 H1 Z" fill="#3e7d55"/><rect x="1" y="11" width="17" height="2" fill="#4a78a8"/></svg><div class="a" style="left:0px;top:851px;width:1434px;height:49px;background:#0b0b0b"></div><svg class="a" style="left:20px;top:865px" width="21" height="22" viewBox="0 0 21 22"><path d="M0 2.8 L9.5 1.4 V10.3 H0 Z M10.5 1.2 L21 0 V10.3 H10.5 Z M0 11.3 H9.5 V20.2 L0 18.9 Z M10.5 11.3 H21 V21.3 L10.5 20.3 Z" fill="#fff"/></svg><div class="a" style="left:60px;top:851px;width:430px;height:49px;background:#f2f2f2;border-top:1px solid #fafafa;border-left:1px solid #fafafa"></div><svg class="a" style="left:71px;top:858px" width="36" height="36" viewBox="0 0 36 36"><circle cx="17.4" cy="17.8" r="16.2" fill="#a0a0a0"/><circle cx="17.4" cy="17.8" r="15.3" fill="#3c3c3c"/><circle cx="17.4" cy="17.8" r="14.6" fill="#050505"/><circle cx="17.4" cy="17.8" r="11.6" fill="#4a4a4a"/><circle cx="17.4" cy="17.8" r="11" fill="#f2f2f2"/></svg><svg class="a" style="left:457px;top:865px" width="15" height="22" viewBox="0 0 15 22"><rect x="3.5" y="1" width="8" height="13" rx="4" fill="none" stroke="#333" stroke-width="1.5"/><path d="M1 11 A6.5 6.5 0 0 0 14 11" fill="none" stroke="#333" stroke-width="1.5"/><path d="M7.5 17.5 V20.5 M3.5 20.5 H11.5" stroke="#333" stroke-width="1.5"/></svg><svg class="a" style="left:509px;top:865px" width="22" height="22" viewBox="0 0 22 22"><path d="M1.6 0.9 V3.2 M13.8 0.9 V3.2 M0.8 3.2 H14.6 M0.8 18.4 H14.6 M1.6 18.4 V20.8 M13.8 18.4 V20.8 M19.8 0.9 V20.8" fill="none" stroke="#f0f0f0" stroke-width="1.1"/><rect x="2.1" y="6.6" width="11.2" height="8.6" fill="none" stroke="#f0f0f0" stroke-width="1.1"/><circle cx="19.8" cy="8.8" r="1.7" fill="#fff"/></svg><svg class="a" style="left:570.5px;top:862px" width="26.5" height="27.5" viewBox="0 0 26.5 27.5"><path d="M2 12 C4 3 12 0 17 1 C23 2 26 8 25.5 14 H8 C8 19 12 22 17 22 C20 22 23 21 24.5 20 V25.5 C22 26.5 19 27 16 27 C8 27 3 21 4 14 C5 10 8 8 10 7 C8 9 7 11 8 11 H18 C18 7 15 5 12 5 C7 5 3 9 2 12 Z" fill="#0f7ad8"/></svg><svg class="a" style="left:630px;top:861px" width="31" height="30" viewBox="0 0 31 30"><path d="M10.2 9 V6.5 A5.3 5.5 0 0 1 20.8 6.5 V9" fill="none" stroke="#e0e0e0" stroke-width="1.2"/><path d="M12.3 9 V7 A3.5 3.8 0 0 1 19.2 7 V9" fill="none" stroke="#bdbdbd" stroke-width="0.9"/><rect x="1" y="8" width="29" height="21" rx="1.5" fill="#fff"/><rect x="9" y="12" width="6" height="6" fill="#f35022"/><rect x="16" y="12" width="6" height="6" fill="#80bb03"/><rect x="9" y="19" width="6" height="6" fill="#03a5f0"/><rect x="16" y="19" width="6" height="6" fill="#ffba08"/></svg><svg class="a" style="left:692px;top:862px" width="32" height="25" viewBox="0 0 32 25"><path d="M1 8.2 L16 0.5 L31 8.2 Z" fill="#fff"/><rect x="1" y="8" width="30" height="16.4" fill="#fff"/><path d="M1.4 8.2 L30.6 8.2 L18.3 14.3 L26 20.8 Z" fill="#0b0b0b"/></svg><svg class="a" style="left:754px;top:862px" width="30" height="29" viewBox="0 0 30 29"><defs><linearGradient id="npb" x1="0" y1="1" x2="1" y2="0"><stop offset="0" stop-color="#0a6a80"/><stop offset="0.35" stop-color="#2aa9c6"/><stop offset="0.7" stop-color="#5cc8de"/><stop offset="1" stop-color="#c8eef6"/></linearGradient></defs><path d="M26.5 4 L28.5 5 L28.5 24.5 L26.5 25 Z" fill="#d9a441"/><path d="M26.5 4 L27.3 24.8 L19 27.8 L3 22 Z" fill="#e6eef1"/><path d="M1.2 20.5 L17.5 24 L19 27.8 L4 23 Z" fill="#c9d4d8"/><path d="M10.8 2.5 L26.5 4.5 L17.5 24 L1.2 20.5 Z" fill="url(#npb)"/><path d="M10.8 1.3 L26.5 3.4 L26.5 4.8 L10.8 2.7 Z" fill="#a3a9ac"/></svg><div class="a" style="left:745px;top:898px;width:51px;height:2px;background:#68b6f3"></div><div class="a" style="left:802px;top:851px;width:61px;height:49px;background:#3b3b3b"></div><div class="a" style="left:802px;top:898px;width:61px;height:2px;background:#68b6f3"></div><svg class="a" style="left:1129px;top:865px" width="21" height="22" viewBox="0 0 21 22"><circle cx="13.8" cy="4.6" r="3.7" fill="#0b0b0b" stroke="#fff" stroke-width="1.4"/><path d="M9.5 10.5 C11 8.5 17 8.5 18.8 12.5" fill="none" stroke="#fff" stroke-width="1.4"/><circle cx="7" cy="11.2" r="3.7" fill="#0b0b0b" stroke="#fff" stroke-width="1.4"/><path d="M1.2 20.3 C1.8 15.5 12 15.5 12.5 20.3" fill="none" stroke="#fff" stroke-width="1.4"/></svg><svg class="a" style="left:1176px;top:869px" width="17" height="11" viewBox="0 0 17 11"><path d="M0.7 9.5 L8.5 1.2 L16.3 9.5" fill="none" stroke="#e6e6e6" stroke-width="1.3"/></svg><svg class="a" style="left:1208px;top:865px" width="17" height="21" viewBox="0 0 17 21"><defs><clipPath id="rs"><path d="M6.8 0.5 H9.3 V4 L12.2 3.3 L12.5 1.2 C14.8 2.8 15.8 5.5 15.8 9.5 V13.5 C15.8 16.5 13.8 18.5 10.5 19.8 H9.6 V15.8 H6.5 V19.8 H5.6 C2.3 18.5 0.5 16.5 0.5 13.5 V9.5 C0.5 5.5 1.5 2.8 3.8 1.2 L4.1 3.3 L6.8 4 Z"/></clipPath></defs><g clip-path="url(#rs)"><rect x="0" y="0" width="17" height="21" fill="#ff1f3d"/><rect x="3" y="0" width="1.8" height="21" fill="#c65a68"/><rect x="5.9" y="0" width="1.4" height="21" fill="#c65a68"/><rect x="9.4" y="0" width="1.4" height="21" fill="#c65a68"/><rect x="11.9" y="0" width="1.8" height="21" fill="#c65a68"/></g></svg><svg class="a" style="left:1233px;top:867px" width="23" height="19" viewBox="0 0 23 19"><rect x="5.2" y="1.2" width="16" height="12.6" fill="none" stroke="#e6e6e6" stroke-width="1.3"/><path d="M12.2 13.8 V16.4 M8.8 16.6 H15.6" stroke="#e6e6e6" stroke-width="1.3"/><rect x="1.2" y="1.2" width="5" height="6.2" fill="#0b0b0b" stroke="#e6e6e6" stroke-width="1.2"/><path d="M3.7 3 V5" stroke="#e6e6e6" stroke-width="1"/><path d="M3.7 7.4 V17.5" stroke="#e6e6e6" stroke-width="1.2"/></svg><svg class="a" style="left:1263px;top:866px" width="22" height="20" viewBox="0 0 22 20"><path d="M1 7 H4.5 L9 2.5 V17.5 L4.5 13 H1 Z" fill="none" stroke="#e6e6e6" stroke-width="1.2"/><path d="M12 7.5 Q13.5 10 12 12.5 M15 5 Q18 10 15 15 M18 2 Q22.5 10 18 18" fill="none" stroke="#e6e6e6" stroke-width="1.2"/></svg><div class="a" style="left:1315px;top:859px;width:10px;height:10px;background:#7a7a7a"></div><div class="a" style="left:1335px;top:859px;width:10px;height:10px;background:#1a1a1a"></div><div class="a" style="left:1345px;top:859px;width:10px;height:10px;background:#6a6a6a"></div><div class="a" style="left:1295px;top:879px;width:10px;height:10px;background:#b4b4b4"></div><div class="a" style="left:1305px;top:879px;width:10px;height:10px;background:#888888"></div><div class="a" style="left:1335px;top:879px;width:10px;height:10px;background:#181818"></div><div class="a" style="left:1355px;top:879px;width:10px;height:10px;background:#b0b0b0"></div><div class="a" style="left:1295px;top:889px;width:10px;height:7px;background:#555555"></div><div class="a" style="left:1335px;top:889px;width:10px;height:7px;background:#8c8c8c"></div><div class="a" style="left:1355px;top:889px;width:10px;height:7px;background:#575757"></div><svg class="a" style="left:1387px;top:865px" width="22" height="19" viewBox="0 0 22 19"><path d="M1 1 H21 V15 H10 L6 18.5 V15 H1 Z" fill="#fff"/><rect x="5" y="4" width="12" height="1.2" fill="#101010"/><rect x="5" y="7.5" width="12" height="1.2" fill="#101010"/><rect x="5" y="11" width="9" height="1.2" fill="#101010"/></svg><svg class="a" style="left:1396px;top:873px" width="23" height="23" viewBox="0 0 23 23"><circle cx="11.5" cy="11.5" r="10.3" fill="#262626" stroke="#8a8a8a" stroke-width="1.1"/><text x="11.8" y="16.8" font-family="Liberation Sans" font-size="14.5" fill="#fff" text-anchor="middle" stroke="#fff" stroke-width="0.6">2</text></svg><div class="a" style="left:1433px;top:851px;width:1px;height:49px;background:#6a6a6a"></div><div class="t" style="left:1.2px;top:69.5px;font-size:15.3px;line-height:15.3px;color:#ffffff;transform:scaleX(0.9541);transform-origin:center top;">SentinelInst...</div><div class="t" style="left:1.2px;top:89.5px;font-size:15.3px;line-height:15.3px;color:#ffffff;transform:scaleX(0.8690);transform-origin:center top;">(1).exe.KEYP</div><div class="t" style="left:128.8px;top:69.5px;font-size:15.3px;line-height:15.3px;color:#ffffff;transform:scaleX(1.0444);transform-origin:center top;">Zoo</div><div class="t" style="left:181.7px;top:69.5px;font-size:15.3px;line-height:15.3px;color:#ffffff;transform:scaleX(0.7843);transform-origin:center top;"><span style="padding:0 0.08em">!</span><span style="padding:0 0.08em">!</span><span style="padding:0 0.08em">!</span>KEYPASS_...</div><div class="t" style="left:7.7px;top:204.5px;font-size:15.3px;line-height:15.3px;color:#ffffff;transform:scaleX(1.0075);transform-origin:center top;">Notepad+...</div><div class="t" style="left:117.3px;top:204.5px;font-size:15.3px;line-height:15.3px;color:#ffffff;transform:scaleX(1.0041);transform-origin:center top;">Google</div><div class="t" style="left:96.5px;top:224.5px;font-size:15.3px;line-height:15.3px;color:#ffffff;transform:scaleX(0.9545);transform-origin:center top;">Chrome.lnk...</div><div class="t" style="left:5.8px;top:339.5px;font-size:15.3px;line-height:15.3px;color:#ffffff;transform:scaleX(0.9352);transform-origin:center top;">Sysinternals</div><div class="t" style="left:118.2px;top:339.5px;font-size:15.3px;line-height:15.3px;color:#ffffff;transform:scaleX(1.0067);transform-origin:center top;">Mozilla</div><div class="t" style="left:98.2px;top:359.5px;font-size:15.3px;line-height:15.3px;color:#ffffff;transform:scaleX(0.9345);transform-origin:center top;">Firefox.lnk....</div><div class="t" style="left:7.1px;top:474.5px;font-size:15.3px;line-height:15.3px;color:#ffffff;transform:scaleX(0.9129);transform-origin:center top;">Recycle Bin</div><div class="t" style="left:86.2px;top:474.5px;font-size:15.3px;line-height:15.3px;color:#ffffff;transform:scaleX(0.7860);transform-origin:center top;"><span style="padding:0 0.08em">!</span><span style="padding:0 0.08em">!</span><span style="padding:0 0.08em">!</span>KEYPASS_...</div><div class="t" style="left:19.4px;top:744.5px;font-size:15.3px;line-height:15.3px;color:#ffffff;transform:scaleX(0.9395);transform-origin:center top;">Scenery</div><div class="t" style="left:115.2px;top:744.5px;font-size:15.3px;line-height:15.3px;color:#ffffff;transform:scaleX(0.9549);transform-origin:center top;">Flowers</div><div class="t" style="left:656.3px;top:172.7px;font-size:13.6px;line-height:13.6px;color:#404040;transform:scaleX(0.9650);transform-origin:left top;">Picture Tools</div><div class="t" style="left:744.9px;top:167.6px;font-size:15px;line-height:15px;color:#9a9a9a;transform:scaleX(1.0557);transform-origin:left top;">Zoo</div><div class="t" style="left:401.8px;top:200.8px;font-size:14.2px;line-height:14.2px;color:#ffffff;transform:scaleX(0.9145);transform-origin:left top;">File</div><div class="t" style="left:464.3px;top:200.8px;font-size:14.2px;line-height:14.2px;color:#3b3b3b;transform:scaleX(0.9567);transform-origin:left top;">Home</div><div class="t" style="left:533.8px;top:200.8px;font-size:14.2px;line-height:14.2px;color:#3b3b3b;transform:scaleX(0.8880);transform-origin:left top;">Share</div><div class="t" style="left:600.6px;top:200.8px;font-size:14.2px;line-height:14.2px;color:#3b3b3b;transform:scaleX(0.9744);transform-origin:left top;">View</div><div class="t" style="left:669.0px;top:200.8px;font-size:14.2px;line-height:14.2px;color:#3b3b3b;transform:scaleX(0.9559);transform-origin:left top;">Manage</div><div class="t" style="left:552.5px;top:235.3px;font-size:15.8px;line-height:15.8px;color:#111111;">Zoo</div><div class="t" style="left:1011.5px;top:236.1px;font-size:15px;line-height:15px;color:#6d6d6d;transform:scaleX(0.9646);transform-origin:left top;">Search Zoo</div><div class="t" style="left:429.7px;top:292.0px;font-size:15.3px;line-height:15.3px;color:#141414;transform:scaleX(0.9347);transform-origin:left top;">Quick access</div><div class="t" style="left:439.5px;top:321.7px;font-size:15.3px;line-height:15.3px;color:#141414;">Desktop</div><div class="t" style="left:439.5px;top:351.7px;font-size:15.3px;line-height:15.3px;color:#141414;transform:scaleX(0.9955);transform-origin:left top;">Documents</div><div class="t" style="left:439.5px;top:381.7px;font-size:15.3px;line-height:15.3px;color:#141414;transform:scaleX(1.0072);transform-origin:left top;">Downloads</div><div class="t" style="left:439.5px;top:411.7px;font-size:15.3px;line-height:15.3px;color:#141414;transform:scaleX(0.9595);transform-origin:left top;">Pictures</div><div class="t" style="left:429.2px;top:452.0px;font-size:15.3px;line-height:15.3px;color:#141414;transform:scaleX(0.9787);transform-origin:left top;">OneDrive</div><div class="t" style="left:429.2px;top:492.0px;font-size:15.3px;line-height:15.3px;color:#141414;transform:scaleX(0.9159);transform-origin:left top;">This PC</div><div class="t" style="left:429.2px;top:532.0px;font-size:15.3px;line-height:15.3px;color:#141414;transform:scaleX(1.0378);transform-origin:left top;">Network</div><div class="t" style="left:593.1px;top:397.7px;font-size:14.5px;line-height:14.5px;color:#111111;transform:scaleX(0.8482);transform-origin:center top;"><span style="padding:0 0.08em">!</span><span style="padding:0 0.08em">!</span><span style="padding:0 0.08em">!</span>KEYPASS_DECR</div><div class="t" style="left:602.6px;top:417.9px;font-size:14.5px;line-height:14.5px;color:#111111;transform:scaleX(0.9113);transform-origin:center top;">YPTION_INFO<span style="padding:0 0.08em">!</span><span style="padding:0 0.08em">!</span><span style="padding:0 0.08em">!</span></div><div class="t" style="left:743.7px;top:397.7px;font-size:14.5px;line-height:14.5px;color:#111111;transform:scaleX(0.9436);transform-origin:center top;">DSC_4145.jpg.KE</div><div class="t" style="left:778.9px;top:417.9px;font-size:14.5px;line-height:14.5px;color:#111111;transform:scaleX(0.8809);transform-origin:center top;">YPASS</div><div class="t" style="left:884.2px;top:397.7px;font-size:14.5px;line-height:14.5px;color:#111111;transform:scaleX(0.9709);transform-origin:center top;">DSC_4145_th.jpg.</div><div class="t" style="left:910.2px;top:417.9px;font-size:14.5px;line-height:14.5px;color:#111111;transform:scaleX(0.8683);transform-origin:center top;">KEYPASS</div><div class="t" style="left:1026.7px;top:397.7px;font-size:14.5px;line-height:14.5px;color:#111111;transform:scaleX(0.9436);transform-origin:center top;">DSC_4321.jpg.KE</div><div class="t" style="left:1061.9px;top:417.9px;font-size:14.5px;line-height:14.5px;color:#111111;transform:scaleX(0.8809);transform-origin:center top;">YPASS</div><div class="t" style="left:601.2px;top:567.1px;font-size:14.5px;line-height:14.5px;color:#111111;transform:scaleX(0.9709);transform-origin:center top;">DSC_4321_th.jpg.</div><div class="t" style="left:627.2px;top:587.3px;font-size:14.5px;line-height:14.5px;color:#111111;transform:scaleX(0.8683);transform-origin:center top;">KEYPASS</div><div class="t" style="left:743.7px;top:567.1px;font-size:14.5px;line-height:14.5px;color:#111111;transform:scaleX(0.9445);transform-origin:center top;">DSC_4351.jpg.KE</div><div class="t" style="left:778.9px;top:587.3px;font-size:14.5px;line-height:14.5px;color:#111111;transform:scaleX(0.8872);transform-origin:center top;">YPASS</div><div class="t" style="left:884.2px;top:567.1px;font-size:14.5px;line-height:14.5px;color:#111111;transform:scaleX(0.9709);transform-origin:center top;">DSC_4351_th.jpg.</div><div class="t" style="left:910.2px;top:587.3px;font-size:14.5px;line-height:14.5px;color:#111111;transform:scaleX(0.8683);transform-origin:center top;">KEYPASS</div><div class="t" style="left:1026.7px;top:567.1px;font-size:14.5px;line-height:14.5px;color:#111111;transform:scaleX(0.9436);transform-origin:center top;">DSC_4384.jpg.KE</div><div class="t" style="left:1061.9px;top:587.3px;font-size:14.5px;line-height:14.5px;color:#111111;transform:scaleX(0.8809);transform-origin:center top;">YPASS</div><div class="t" style="left:395.2px;top:636.4px;font-size:15.2px;line-height:15.2px;color:#1d3c6a;transform:scaleX(0.9933);transform-origin:left top;">29 items</div><div class="t" style="left:116.1px;top:867.5px;font-size:18.5px;line-height:18.5px;color:#333333;transform:scaleX(0.9745);transform-origin:left top;">Type here to search</div></body></html>
